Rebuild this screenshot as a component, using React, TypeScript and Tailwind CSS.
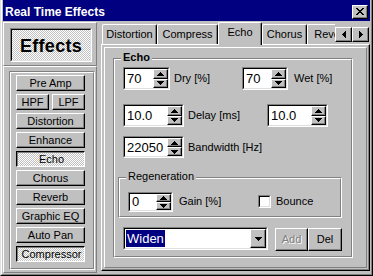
import React from 'react';

const raised =
  'bg-[#c0c0c0] border-t border-l border-t-white border-l-white border-b border-r border-b-black border-r-black shadow-[inset_-1px_-1px_#808080]';
const pressed =
  'border-t border-l border-t-black border-l-black border-b border-r border-b-white border-r-white shadow-[inset_1px_1px_#808080] bg-[image:repeating-conic-gradient(#fff_0_25%,#c0c0c0_0_50%)] bg-[length:2px_2px]';

function Px({ rows, w, h }: { rows: [number, number, number][]; w: number; h: number }) {
  // tiny pixel glyph: [x, y, width]
  return (
    <svg width={w} height={h} viewBox={`0 0 ${w} ${h}`} shapeRendering="crispEdges">
      {rows.map(([x, y, cw], i) => (
        <rect key={i} x={x} y={y} width={cw} height={1} fill="black" />
      ))}
    </svg>
  );
}

const upArrow: [number, number, number][] = [[3, 0, 1], [2, 1, 3], [1, 2, 5], [0, 3, 7]];
const downArrow: [number, number, number][] = [[0, 0, 7], [1, 1, 5], [2, 2, 3], [3, 3, 1]];
const leftArrow: [number, number, number][] = [[3, 0, 1], [2, 1, 2], [1, 2, 3], [0, 3, 4], [1, 4, 3], [2, 5, 2], [3, 6, 1]];
const rightArrow: [number, number, number][] = [[0, 0, 1], [0, 1, 2], [0, 2, 3], [0, 3, 4], [0, 4, 3], [0, 5, 2], [0, 6, 1]];
const closeX: [number, number, number][] = [
  [0, 0, 2], [6, 0, 2], [1, 1, 2], [5, 1, 2], [2, 2, 4], [3, 3, 2], [2, 4, 4], [1, 5, 2], [5, 5, 2], [0, 6, 2], [6, 6, 2],
];

function Sunken({ className, children }: { className: string; children: React.ReactNode }) {
  return (
    <div className={`${className} flex border-t border-l border-t-[#808080] border-l-[#808080] border-b border-r border-b-white border-r-white`}>
      <div className="flex-1 flex bg-white border-t border-l border-t-black border-l-black border-b border-r border-b-[#dfdfdf] border-r-[#dfdfdf]">
        {children}
      </div>
    </div>
  );
}

function SpinBox({ value, className }: { value: string; className: string }) {
  return (
    <Sunken className={className}>
      <span className="flex-1 pl-[2px] self-center text-[13px] leading-none">{value}</span>
      <div className="flex flex-col w-[15px]">
        <div className={`flex-1 flex items-center justify-center ${raised}`}>
          <Px rows={upArrow} w={7} h={4} />
        </div>
        <div className={`flex-1 flex items-center justify-center ${raised}`}>
          <Px rows={downArrow} w={7} h={4} />
        </div>
      </div>
    </Sunken>
  );
}

function EffectButton({ label, on, w = 'w-[69px]' }: { label: string; on?: boolean; w?: string }) {
  return (
    <div className={`${w} h-[16px] flex items-center justify-center text-[11px] leading-none ${on ? pressed : raised}`}>
      <span className={on ? 'translate-x-px' : ''}>{label}</span>
    </div>
  );
}

function Tab({ label, w, active }: { label: string; w: string; active?: boolean }) {
  return (
    <div
      className={`${w} shrink-0 flex items-center justify-center text-[11px] leading-none bg-[#c0c0c0] border-t border-l border-t-white border-l-white border-r border-r-black shadow-[inset_-1px_0_#808080] rounded-tl-[2px] rounded-tr-[2px] ${
        active ? 'h-[23px] pb-[3px]' : 'h-[20px] mb-px'
      }`}
    >
      {label}
    </div>
  );
}

export default function App() {
  return (
    <div className="w-[373px] h-[276px] bg-[#c0c0c0] border-l border-l-[#dfdfdf] border-r border-r-black border-b border-b-black font-['Liberation_Sans',Arial,sans-serif] text-black overflow-hidden select-none">
      <div className="h-full flex flex-col border-l border-l-white border-r border-r-[#808080] border-b border-b-[#808080] px-px pb-px">
        {/* title bar */}
        <div className="h-[21px] shrink-0 bg-[#000080] flex items-center justify-between pl-[2px] pr-[2px] pt-[2px]">
          <span className="text-white font-bold text-[12px] leading-none">Real Time Effects</span>
          <div className={`w-[16px] h-[14px] flex items-center justify-center ${raised}`}>
            <Px rows={closeX} w={8} h={7} />
          </div>
        </div>

        <div className="flex-1 flex gap-[4px] pt-px">
          {/* left column */}
          <div className="w-[94px] shrink-0 flex flex-col">
            <div className="h-[44px] border-t border-l border-t-white border-l-white border-b border-r border-b-[#808080] border-r-[#808080]">
              <div className="ml-[6px] mt-[5px] w-[82px] h-[34px] flex border-t border-l border-t-[#808080] border-l-[#808080] border-b border-r border-b-white border-r-white">
                <div className="flex-1 flex items-center justify-center border-t border-l border-t-black border-l-black border-b border-r border-b-[#dfdfdf] border-r-[#dfdfdf] bg-[image:repeating-conic-gradient(#fff_0_25%,#c0c0c0_0_50%)] bg-[length:2px_2px]">
                  <span className="font-bold text-[18px] leading-none tracking-[0.3px] pt-[2px]">Effects</span>
                </div>
              </div>
            </div>
            <div className="flex-1 border-t border-l border-t-white border-l-white border-b border-r border-b-[#808080] border-r-[#808080]">
              <div className="ml-[5px] mt-[4px] w-[86px] h-[199px] flex border-t border-l border-t-[#808080] border-l-[#808080] border-b border-r border-b-white border-r-white">
                <div className="flex-1 flex flex-col gap-[3px] pl-[5px] pt-[2px] border-t border-l border-t-white border-l-white border-b border-r border-b-[#808080] border-r-[#808080]">
                  <EffectButton label="Pre Amp" />
                  <div className="flex gap-[3px]">
                    <EffectButton label="HPF" w="w-[33px]" />
                    <EffectButton label="LPF" w="w-[33px]" />
                  </div>
                  <EffectButton label="Distortion" />
                  <EffectButton label="Enhance" />
                  <EffectButton label="Echo" on />
                  <EffectButton label="Chorus" />
                  <EffectButton label="Reverb" />
                  <EffectButton label="Graphic EQ" />
                  <EffectButton label="Auto Pan" />
                  <EffectButton label="Compressor" on />
                </div>
              </div>
            </div>
          </div>

          {/* right column */}
          <div className="flex-1 min-w-0 flex flex-col">
            <div className="relative z-10 h-[23px] -mb-px flex">
              <div className="w-[234px] shrink-0 flex items-end overflow-hidden pl-px">
                <Tab label="Distortion" w="w-[55px]" />
                <Tab label="Compress" w="w-[61px]" />
                <Tab label="Echo" w="w-[44px]" active />
                <Tab label="Chorus" w="w-[45px]" />
                <Tab label="Reverb" w="w-[50px]" />
              </div>
              <div className="flex self-start mt-[5px]">
                <div className={`w-[17px] h-[15px] flex items-center justify-center ${raised}`}>
                  <Px rows={leftArrow} w={4} h={7} />
                </div>
                <div className={`w-[17px] h-[15px] flex items-center justify-center ${raised}`}>
                  <Px rows={rightArrow} w={4} h={7} />
                </div>
              </div>
            </div>

            {/* tab page */}
            <div className="flex-1 mb-[2px] flex p-[2px] border-t border-l border-t-white border-l-white border-b border-r border-b-black border-r-black shadow-[inset_-1px_-1px_#808080]">
              <div className="flex-1 border-t border-l border-t-white border-l-white border-b border-r border-b-[#808080] border-r-[#808080]">
                {/* Echo group */}
                <div className="relative ml-[8px] mt-[10px] w-[240px] h-[200px] flex border-t border-l border-t-[#808080] border-l-[#808080] border-b border-r border-b-white border-r-white">
                  <span className="absolute left-[7px] top-[-7px] px-[2px] bg-[#c0c0c0] font-bold text-[11px] leading-none">Echo</span>
                  <div className="flex-1 flex flex-col border-t border-l border-t-white border-l-white border-b border-r border-b-[#808080] border-r-[#808080] text-[11px]">
                    <div className="flex items-center mt-[7px] pl-[8px]">
                      <SpinBox value="70" className="w-[47px] h-[23px]" />
                      <span className="ml-[4px] w-[68px] leading-none">Dry [%]</span>
                      <SpinBox value="70" className="w-[46px] h-[23px]" />
                      <span className="ml-[6px] leading-none">Wet [%]</span>
                    </div>
                    <div className="flex items-center mt-[14px] pl-[8px]">
                      <SpinBox value="10.0" className="w-[61px] h-[23px]" />
                      <span className="ml-[4px] w-[79px] leading-none">Delay [ms]</span>
                      <SpinBox value="10.0" className="w-[61px] h-[23px]" />
                    </div>
                    <div className="flex items-center mt-[9px] pl-[8px]">
                      <SpinBox value="22050" className="w-[61px] h-[22px]" />
                      <span className="ml-[4px] leading-none">Bandwidth [Hz]</span>
                    </div>

                    {/* Regeneration group */}
                    <div className="relative ml-[3px] mt-[19px] w-[224px] h-[41px] flex border-t border-l border-t-[#808080] border-l-[#808080] border-b border-r border-b-white border-r-white">
                      <span className="absolute left-[7px] top-[-7px] px-[2px] bg-[#c0c0c0] text-[11px] leading-none">Regeneration</span>
                      <div className="flex-1 flex items-center pl-[8px] pt-[8px] border-t border-l border-t-white border-l-white border-b border-r border-b-[#808080] border-r-[#808080]">
                        <SpinBox value="0" className="w-[45px] h-[20px]" />
                        <span className="ml-[6px] w-[79px] leading-none">Gain [%]</span>
                        <div className="w-[13px] h-[13px] flex border-t border-l border-t-[#808080] border-l-[#808080] border-b border-r border-b-white border-r-white">
                          <div className="flex-1 bg-white border-t border-l border-t-black border-l-black border-b border-r border-b-[#dfdfdf] border-r-[#dfdfdf]" />
                        </div>
                        <span className="ml-[5px] leading-none">Bounce</span>
                      </div>
                    </div>

                    {/* preset row */}
                    <div className="flex items-start mt-[9px] pl-[8px]">
                      <Sunken className="w-[145px] h-[23px]">
                        <div className="flex-1 flex items-center pl-px">
                          <span className="bg-[#000080] text-white text-[13px] leading-none px-px py-[2px]">Widen</span>
                        </div>
                        <div className={`w-[16px] flex items-center justify-center ${raised}`}>
                          <Px rows={downArrow} w={7} h={4} />
                        </div>
                      </Sunken>
                      <div className={`ml-[7px] mt-px w-[33px] h-[23px] flex items-center justify-center text-[#808080] [text-shadow:1px_1px_#fff] ${raised}`}>
                        Add
                      </div>
                      <div className={`mt-px w-[34px] h-[23px] flex items-center justify-center ${raised}`}>Del</div>
                    </div>
                  </div>
                </div>
              </div>
            </div>
          </div>
        </div>
      </div>
    </div>
  );
}
